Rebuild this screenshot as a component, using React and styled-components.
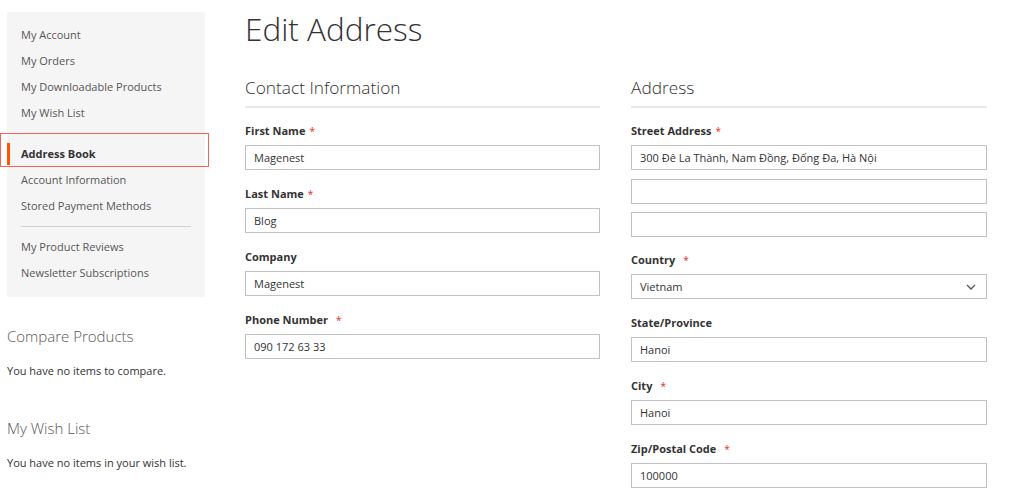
import React from "react";
import styled, { createGlobalStyle } from "styled-components";

const GlobalStyle = createGlobalStyle`
  body {
    margin: 0;
    background: #fff;
    font-family: "Open Sans", "Noto Sans", sans-serif;
    color: #333;
  }
`;

const Page = styled.div`
  display: flex;
  align-items: flex-start;
  width: 1024px;
  height: 493px;
  overflow: hidden;
  padding-left: 7px;
  box-sizing: border-box;
`;

const Sidebar = styled.aside`
  width: 198px;
  flex-shrink: 0;
  padding-top: 12px;
`;

const NavPanel = styled.nav`
  background: #f5f5f5;
  padding: 10px 0 11px;
`;

const NavItem = styled.div`
  position: relative;
  height: 26px;
  line-height: 26px;
  padding-left: 14px;
  font-size: 11px;
  color: ${(p) => (p.$active ? "#333" : "#575757")};
  font-weight: ${(p) => (p.$active ? 700 : 400)};
  white-space: nowrap;
  ${(p) =>
    p.$active &&
    `
    &::before {
      content: "";
      position: absolute;
      left: 0;
      top: 2px;
      bottom: 2px;
      width: 3px;
      background: #ff5501;
    }
  `}
`;

const Highlight = styled.span`
  position: absolute;
  left: -7px;
  right: -4px;
  top: -8px;
  bottom: 0;
  border: 1px solid #f0625a;
  pointer-events: none;
`;

const NavDivider = styled.div`
  height: 1px;
  background: #d1d1d1;
  margin: 7px 14px 7px;
`;

const Block = styled.div`
  margin-top: ${(p) => p.$top}px;
`;

const BlockTitle = styled.div`
  font-size: 15px;
  font-weight: 300;
  color: #575757;
  line-height: 20px;
`;

const BlockText = styled.div`
  font-size: 11px;
  color: #333;
  margin-top: 17px;
  line-height: 16px;
`;

const Main = styled.main`
  margin-left: 40px;
  width: 742px;
`;

const Title = styled.h1`
  margin: 9px 0 0;
  font-size: 31.5px;
  font-weight: 300;
  line-height: 40px;
  color: #333;
`;

const Columns = styled.div`
  display: grid;
  grid-template-columns: 355px 356px;
  column-gap: 31px;
  margin-top: 28px;
`;

const Fieldset = styled.section``;

const Legend = styled.div`
  font-size: 17.3px;
  font-weight: 300;
  color: #333;
  line-height: 22px;
  padding-bottom: 7px;
  border-bottom: 2px solid #e8e8e8;
  margin-bottom: 15px;
`;

const Field = styled.div`
  margin-bottom: ${(p) => p.$gap ?? 16}px;
`;

const Label = styled.div`
  font-size: 11px;
  font-weight: 700;
  color: #333;
  line-height: 16px;
  margin-bottom: 6px;
`;

const Star = styled.span`
  color: #e02b27;
  font-weight: 400;
  margin-left: ${(p) => (p.$wide ? 8 : 4)}px;
  font-size: 10px;
`;

const Input = styled.div`
  height: 25px;
  box-sizing: border-box;
  border: 1px solid #c2c2c2;
  background: #fff;
  padding: 0 8px;
  font-size: 11px;
  line-height: 23px;
  color: #333;
  margin-bottom: ${(p) => p.$mb ?? 0}px;
  white-space: nowrap;
`;

const Select = styled(Input)`
  display: flex;
  align-items: center;
  justify-content: space-between;
  padding-right: 10px;
`;

const Chevron = () => (
  <svg width="10" height="6" viewBox="0 0 10 6" fill="none">
    <path d="M1 1l4 4 4-4" stroke="#555" strokeWidth="1.3" />
  </svg>
);

const LabelText = ({ text, req, wide }) => (
  <Label>
    {text}
    {req && <Star $wide={wide}>*</Star>}
  </Label>
);

export default function App() {
  return (
    <>
      <GlobalStyle />
      <Page>
        <Sidebar>
          <NavPanel>
            <NavItem>My Account</NavItem>
            <NavItem>My Orders</NavItem>
            <NavItem>My Downloadable Products</NavItem>
            <NavItem>My Wish List</NavItem>
            <NavDivider />
            <NavItem $active>
              Address Book
              <Highlight />
            </NavItem>
            <NavItem>Account Information</NavItem>
            <NavItem>Stored Payment Methods</NavItem>
            <NavDivider />
            <NavItem>My Product Reviews</NavItem>
            <NavItem>Newsletter Subscriptions</NavItem>
          </NavPanel>
          <Block $top={29}>
            <BlockTitle>Compare Products</BlockTitle>
            <BlockText>You have no items to compare.</BlockText>
          </Block>
          <Block $top={39}>
            <BlockTitle>My Wish List</BlockTitle>
            <BlockText>You have no items in your wish list.</BlockText>
          </Block>
        </Sidebar>
        <Main>
          <Title>Edit Address</Title>
          <Columns>
            <Fieldset>
              <Legend>Contact Information</Legend>
              <Field>
                <LabelText text="First Name" req />
                <Input>Magenest</Input>
              </Field>
              <Field>
                <LabelText text="Last Name" req />
                <Input>Blog</Input>
              </Field>
              <Field>
                <LabelText text="Company" />
                <Input>Magenest</Input>
              </Field>
              <Field>
                <LabelText text="Phone Number" req wide />
                <Input>090 172 63 33</Input>
              </Field>
            </Fieldset>
            <Fieldset>
              <Legend>Address</Legend>
              <Field $gap={15}>
                <LabelText text="Street Address" req />
                <Input $mb={9}>300 Đê La Thành, Nam Đồng, Đống Đa, Hà Nội</Input>
                <Input $mb={8}></Input>
                <Input></Input>
              </Field>
              <Field>
                <LabelText text="Country" req wide />
                <Select>
                  Vietnam
                  <Chevron />
                </Select>
              </Field>
              <Field>
                <LabelText text="State/Province" />
                <Input>Hanoi</Input>
              </Field>
              <Field>
                <LabelText text="City" req wide />
                <Input>Hanoi</Input>
              </Field>
              <Field>
                <LabelText text="Zip/Postal Code" req wide />
                <Input>100000</Input>
              </Field>
            </Fieldset>
          </Columns>
        </Main>
      </Page>
    </>
  );
}
